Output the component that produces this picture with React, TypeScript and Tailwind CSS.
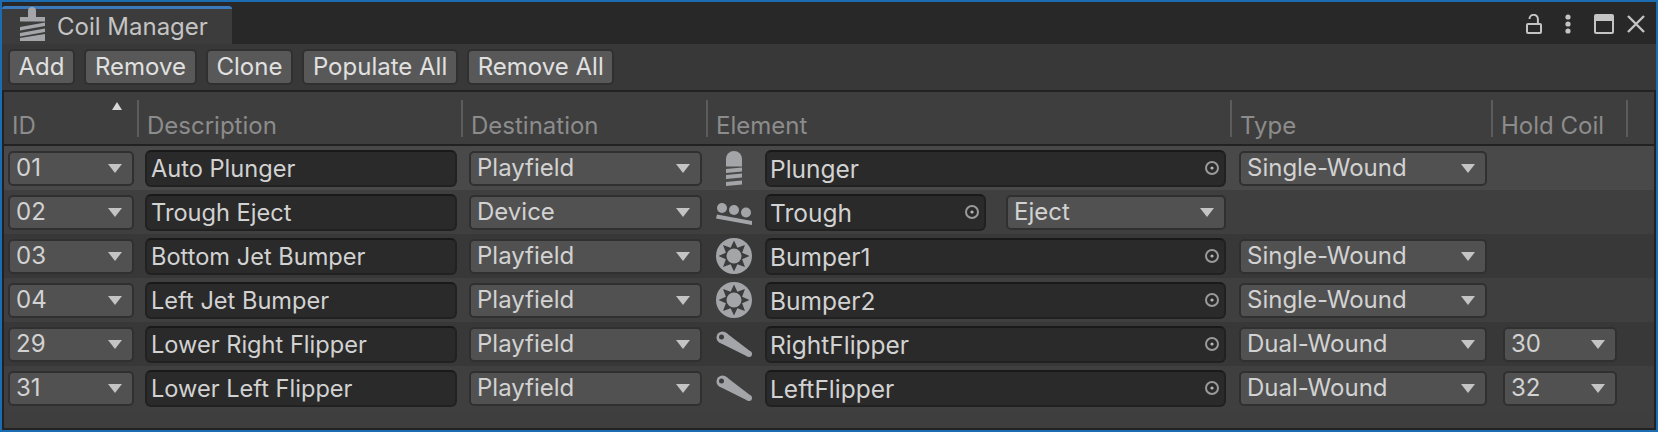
type Row = {
  id: string;
  desc: string;
  dest: string;
  icon: "plunger" | "trough" | "bumper" | "flipper";
  element: string;
  extra?: string;
  type?: string;
  hold?: string;
  bg: string;
};

const rows: Row[] = [
  { id: "01", desc: "Auto Plunger", dest: "Playfield", icon: "plunger", element: "Plunger", type: "Single-Wound", bg: "bg-[#494949]" },
  { id: "02", desc: "Trough Eject", dest: "Device", icon: "trough", element: "Trough", extra: "Eject", bg: "bg-[#3f3f3f]" },
  { id: "03", desc: "Bottom Jet Bumper", dest: "Playfield", icon: "bumper", element: "Bumper1", type: "Single-Wound", bg: "bg-[#383838]" },
  { id: "04", desc: "Left Jet Bumper", dest: "Playfield", icon: "bumper", element: "Bumper2", type: "Single-Wound", bg: "bg-[#3f3f3f]" },
  { id: "29", desc: "Lower Right Flipper", dest: "Playfield", icon: "flipper", element: "RightFlipper", type: "Dual-Wound", hold: "30", bg: "bg-[#383838]" },
  { id: "31", desc: "Lower Left Flipper", dest: "Playfield", icon: "flipper", element: "LeftFlipper", type: "Dual-Wound", hold: "32", bg: "bg-[#3f3f3f]" },
];

// 8 pointed star for the bumper icon
const starPoints = Array.from({ length: 16 }, (_, i) => {
  const r = i % 2 === 0 ? 15.5 : 8.8;
  const a = (i * Math.PI) / 8 - Math.PI / 2;
  return `${18 + r * Math.cos(a)},${18 + r * Math.sin(a)}`;
}).join(" ");

function Select({ value, className }: { value: string; className: string }) {
  return (
    <div className={`flex h-[35px] items-center justify-between rounded-[5px] border-2 border-[#303030] bg-[#515151] pl-[6px] pr-[10px] text-[#d2d2d2] ${className}`}>
      <span>{value}</span>
      <svg width="14" height="9" viewBox="0 0 14 9"><path d="M0 0h14L7 9z" fill="#c4c4c4" /></svg>
    </div>
  );
}

function Field({ value, className, picker }: { value: string; className: string; picker?: boolean }) {
  return (
    <div className={`flex h-[37px] items-center justify-between rounded-[6px] border-2 border-[#212121] border-t-[#191919] bg-[#2a2a2a] pr-[4px] text-[#d2d2d2] ${picker ? "pl-[3px] text-[24.5px]" : "pl-[4px] text-[23.6px]"} ${className}`}>
      <span className="pt-[2px]">{value}</span>
      {picker && (
        <svg width="16" height="16" viewBox="0 0 16 16">
          <circle cx="8" cy="8" r="6" fill="none" stroke="#9a9a9a" strokeWidth="2" />
          <circle cx="8" cy="8" r="1.600" fill="#b8b8b8" />
        </svg>
      )}
    </div>
  );
}

function ElementIcon({ icon }: { icon: Row["icon"] }) {
  if (icon === "plunger") {
    return (
      <svg width="36" height="35" viewBox="0 0 36 35" fill="#a3a5a8">
        <path d="M10 8a8 8 0 0 1 16 0v7.500H10z" />
        <path d="M10 18l16-1.500v4L10 22zM10 24l16-1.500v4L10 28zM10 31l16-1.500v4L10 35z" />
      </svg>
    );
  }
  if (icon === "trough") {
    return (
      <svg width="36" height="22" viewBox="0 0 36 22" fill="#a3a5a8" className="mt-[4px]">
        <circle cx="6" cy="5" r="5" />
        <circle cx="18" cy="7" r="5" />
        <circle cx="30" cy="9.500" r="5" />
        <path d="M1 11.500l35 6.500v4L0 15.500z" />
      </svg>
    );
  }
  if (icon === "bumper") {
    return (
      <svg width="36" height="36" viewBox="0 0 36 36">
        <circle cx="18" cy="18" r="18" fill="#a3a5a8" />
        <polygon points={starPoints} fill="#3c3c3c" />
        <circle cx="18" cy="18" r="7.500" fill="#a3a5a8" />
      </svg>
    );
  }
  return (
    <svg width="36" height="26" viewBox="0 0 36 26" fill="#a3a5a8">
      <circle cx="6.500" cy="6.500" r="6" />
      <circle cx="33" cy="23" r="3" />
      <path d="M9.700 1.400L34.600 20.500 31.400 25.500 3.300 11.600z" />
      <circle cx="5.500" cy="6" r="2.500" fill="#3c3c3c" />
    </svg>
  );
}

const headers = [
  { label: "ID", w: "w-[135px]" },
  { label: "Description", w: "w-[324px]" },
  { label: "Destination", w: "w-[245px]" },
  { label: "Element", w: "w-[524px]" },
  { label: "Type", w: "w-[261px]" },
  { label: "Hold Coil", w: "w-[135px]" },
];

export default function App() {
  return (
    <div className="flex h-[432px] w-[1658px] flex-col overflow-hidden border-2 border-[#1b6cb0] bg-[#383838] font-['Inter',sans-serif] text-[24px] leading-none">
      <div className="flex h-[42px] shrink-0 items-end justify-between bg-[#282828]">
        <div className="flex h-[38px] w-[230px] items-center gap-[12px] rounded-t-[3px] border-t-[3px] border-[#3a79bb] bg-[#3c3c3c] pl-[18px] text-[#c4c4c4]">
          <svg width="25" height="35" viewBox="0 0 25 35" fill="#a3a5a8" className="-mt-[2px] self-start">
            <path d="M8 4a4 4 0 0 1 8 0v7H8z" />
            <path d="M0 10h25v4.500H0z" />
            <path d="M0 20l25-4.500V19L0 23.500zM0 26l25-4.500V25L0 29.500z" />
            <path d="M0 31l25-4v7H0z" />
          </svg>
          <span>Coil Manager</span>
        </div>
        <div className="mb-[10px] mr-[11px] flex items-center">
          <svg width="16" height="20" viewBox="0 0 16 20" fill="none" stroke="#c4c4c4" strokeWidth="2" className="mr-[23px]">
            <rect x="1" y="10" width="14" height="9" rx="1" />
            <path d="M3.500 5a4.200 4.200 0 0 1 8.400 0v5" />
          </svg>
          <svg width="6" height="20" viewBox="0 0 6 20" fill="#c4c4c4" className="mr-[23px]">
            <circle cx="3" cy="3" r="2.600" />
            <circle cx="3" cy="10" r="2.600" />
            <circle cx="3" cy="17" r="2.600" />
          </svg>
          <svg width="20" height="20" viewBox="0 0 20 20" fill="none" stroke="#c4c4c4" strokeWidth="2" className="mr-[13px]">
            <rect x="1" y="1" width="18" height="18" rx="1" />
            <path d="M1 4.500h18" strokeWidth="5" />
          </svg>
          <svg width="18" height="18" viewBox="0 0 18 18" stroke="#c4c4c4" strokeWidth="2.400">
            <path d="M1 1l16 16M17 1L1 17" />
          </svg>
        </div>
      </div>

      <div className="flex h-[46px] shrink-0 items-center gap-[9.5px] pl-[6px]">
        {["Add", "Remove", "Clone", "Populate All", "Remove All"].map((b) => (
          <div key={b} className="flex h-[36px] items-center rounded-[5px] border-2 border-[#303030] bg-[#585858] px-[8.5px] text-[#e0e0e0]">
            {b}
          </div>
        ))}
      </div>

      <div className="flex-1 border-2 border-[#222222] bg-[#3e3e3e]">
        <div className="flex h-[54px] border-b-2 border-[#222222] text-[#8c8c8c]">
          {headers.map((h, i) => (
            <div key={h.label} className={`relative flex items-end pb-[6px] pl-[8px] ${h.w}`}>
              <span>{h.label}</span>
              <div className="absolute bottom-[7px] right-0 h-[37px] w-[2px] bg-[#5c5c5c]" />
              {i === 0 && (
                <svg width="10" height="8" viewBox="0 0 10 8" className="absolute right-[17px] top-[10px]">
                  <path d="M5 0l5 8H0z" fill="#d8d8d8" />
                </svg>
              )}
            </div>
          ))}
        </div>

        {rows.map((r) => (
          <div key={r.id} className={`flex h-[44px] items-center ${r.bg}`}>
            <Select value={r.id} className="ml-[4px] w-[126px]" />
            <Field value={r.desc} className="ml-[11px] w-[312px]" />
            <Select value={r.dest} className="ml-[12px] w-[233px]" />
            <div className="ml-[14px] flex w-[36px] justify-center">
              <ElementIcon icon={r.icon} />
            </div>
            {r.extra ? (
              <div className="ml-[13px] flex w-[461px] items-center gap-[20px]">
                <Field value={r.element} className="w-[221px]" picker />
                <Select value={r.extra} className="w-[220px]" />
              </div>
            ) : (
              <Field value={r.element} className="ml-[13px] w-[461px]" picker />
            )}
            {r.type && <Select value={r.type} className="ml-[13px] w-[248px]" />}
            {r.hold && <Select value={r.hold} className="ml-[16px] w-[114px]" />}
          </div>
        ))}
      </div>
    </div>
  );
}
